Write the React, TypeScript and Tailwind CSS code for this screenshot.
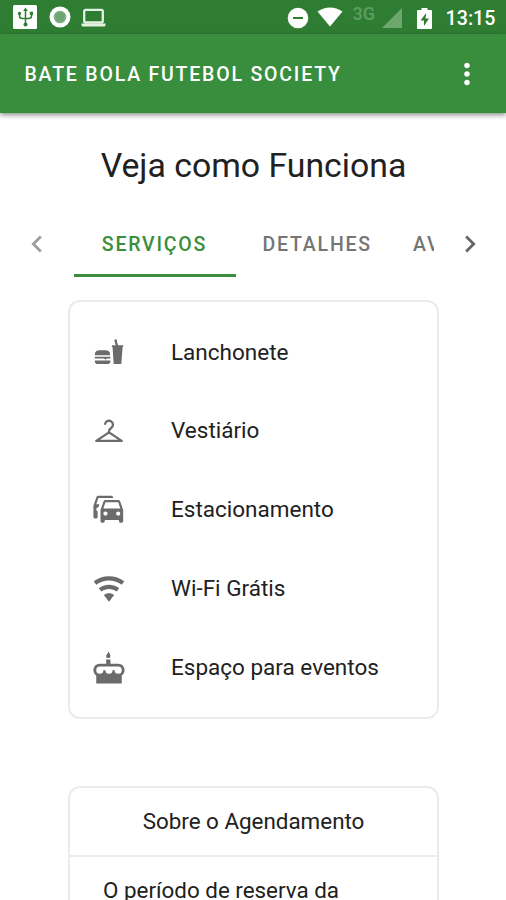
import type { ReactNode } from 'react';
import { clsx } from 'clsx';
import { MdChevronLeft, MdChevronRight, MdMoreVert } from 'react-icons/md';

interface Service {
  label: string;
  icon: ReactNode;
}

function PathIcon({ d }: { d: string }) {
  return (
    <svg viewBox="0 0 24 24" fill="currentColor" className="size-[34px]">
      <path d={d} />
    </svg>
  );
}

function FoodIcon() {
  return (
    <svg viewBox="0 0 24 24" fill="currentColor" className="size-[34px]">
      <path d="M2 14.3v-.6c0-1.900 1.400-2.900 3.300-2.900h4.200c1.900 0 3.300 1 3.300 2.900v.6zM2 15.400h11v1.100h-2.300l-1.200.8-1.200-.8H2zM2 18h11v.5c0 1.300-.9 2-2 2H4c-1.100 0-2-.7-2-2z" />
      <path d="M14 7.200h2.700l-1-3.700 1.500-.6 1.200 4.300H22v1.300h-.4l-.9 12h-5.400l-.8-12H14z" />
    </svg>
  );
}

function HangerIcon() {
  return (
    <svg viewBox="0 0 24 24" fill="none" stroke="currentColor" strokeWidth="1.6" strokeLinejoin="round" className="size-[34px]">
      <path d="M9.200 7.600a2.800 2.800 0 1 1 4.300 2.300c-1 .7-1.500 1.100-1.500 2.300v.8M12 13 3 19h18z" />
    </svg>
  );
}

const WIFI =
  'M12,21L15.6,16.2C14.6,15.45 13.35,15 12,15C10.65,15 9.4,15.45 8.4,16.2L12,21M12,3C7.95,3 4.21,4.34 1.2,6.6L3,9C5.5,7.12 8.62,6 12,6C15.38,6 18.5,7.12 21,9L22.8,6.6C19.79,4.34 16.05,3 12,3M12,9C9.3,9 6.81,9.89 4.8,11.4L6.6,13.8C8.1,12.67 9.97,12 12,12C14.03,12 15.9,12.67 17.4,13.8L19.2,11.4C17.19,9.89 14.7,9 12,9Z';
const CARS =
  'M8,11L9.5,6.5H18.5L20,11M18.5,16A1.5,1.5 0 0,1 17,14.5A1.5,1.5 0 0,1 18.5,13A1.5,1.5 0 0,1 20,14.5A1.5,1.5 0 0,1 18.5,16M9.5,16A1.5,1.5 0 0,1 8,14.5A1.5,1.5 0 0,1 9.5,13A1.5,1.5 0 0,1 11,14.5A1.5,1.5 0 0,1 9.5,16M19.92,6C19.71,5.4 19.14,5 18.5,5H9.5C8.86,5 8.29,5.4 8.08,6L6,12V20A1,1 0 0,0 7,21H8A1,1 0 0,0 9,20V19H19V20A1,1 0 0,0 20,21H21A1,1 0 0,0 22,20V12L19.92,6M14.92,3C14.71,2.4 14.14,2 13.5,2H4.5C3.86,2 3.29,2.4 3.08,3L1,9V17A1,1 0 0,0 2,18H3A1,1 0 0,0 4,17V12.91C3.22,12.63 2.82,11.77 3.1,11C3.32,10.4 3.87,10 4.5,10H4.57L5.27,8H3L4.5,3.5H15.09L14.92,3Z';
const CAKE =
  'M11.5,0.5C12,0.75 13,2.4 13,3.5C13,4.6 12.33,5 11.5,5C10.67,5 10,4.85 10,3.75C10,2.65 11,2 11.5,0.5M18.5,9C21,9 23,11 23,13.5C23,15.06 22.21,16.43 21,17.24V23H12L3,23V17.24C1.79,16.43 1,15.06 1,13.5C1,11 3,9 5.5,9H10V6H13V9H18.5M12,16A2.5,2.5 0 0,0 14.5,13.5H16A2.5,2.5 0 0,0 18.5,16A2.5,2.5 0 0,0 21,13.5A2.5,2.5 0 0,0 18.5,11H5.5A2.5,2.5 0 0,0 3,13.5A2.5,2.5 0 0,0 5.5,16A2.5,2.5 0 0,0 8,13.5H9.5A2.5,2.5 0 0,0 12,16Z';

const SERVICES: Service[] = [
  { label: 'Lanchonete', icon: <FoodIcon /> },
  { label: 'Vestiário', icon: <HangerIcon /> },
  { label: 'Estacionamento', icon: <PathIcon d={CARS} /> },
  { label: 'Wi-Fi Grátis', icon: <PathIcon d={WIFI} /> },
  { label: 'Espaço para eventos', icon: <PathIcon d={CAKE} /> },
];

function StatusBar() {
  return (
    <div className="flex h-[34px] shrink-0 items-center bg-[#2e7d32] pl-[13px] pr-[10.5px] text-white">
      {/* Notifications */}
      <svg viewBox="0 0 24 24" className="size-6">
        <rect width="24" height="24" rx="1.500" fill="#fff" />
        <g fill="none" stroke="#2e7d32" strokeWidth="1.500">
          <path d="M12.500 4v16M6.500 8.500v2.500q0 2.500 3 2.500h6q3 0 3-2.500V8" />
        </g>
        <path d="m12.500 2.500 2.300 3.500h-4.600zM16.800 6.800H20V10h-3.200z" fill="#2e7d32" />
        <circle cx="6.500" cy="8.500" r="1.700" fill="#2e7d32" />
        <circle cx="12.500" cy="19.500" r="2" fill="#2e7d32" />
      </svg>
      <svg viewBox="0 0 22 22" className="ml-[11.500px] size-[22px]">
        <circle cx="11" cy="11" r="10.500" fill="#fff" />
        <circle cx="11" cy="11" r="6.300" fill="#80b183" />
        <circle cx="11" cy="11" r="4.800" fill="#6fa573" />
      </svg>
      <svg viewBox="0 0 25 20" className="ml-[10.5px] h-5 w-[25px] translate-y-px">
        <rect x="3.200" y="1.800" width="18.600" height="12.700" rx="1.500" fill="none" stroke="#e3f2e2" strokeWidth="2.300" />
        <path d="M0.500 15.500h24v1.500q0 1.500-1.500 1.500H2q-1.500 0-1.500-1.500z" fill="#e3f2e2" />
      </svg>

      {/* System icons */}
      <svg viewBox="0 0 22 22" className="ml-auto size-[22px] translate-y-px">
        <circle cx="11" cy="11" r="10.300" fill="#fff" />
        <path d="M6 10h10v2H6z" fill="#2e7d32" />
      </svg>
      <svg viewBox="0 0 26 20" className="ml-[8px] h-5 w-[26px]">
        <path d="M.5 4.500Q13-3.500 25.500 4.500L13 19.500z" fill="#fff" />
      </svg>
      <span className="ml-[10px] h-[27px] text-[18px] font-medium leading-[20px] text-[#5f9e62]">3G</span>
      <svg viewBox="0 0 20 20" className="ml-[7px] h-5 w-5 translate-y-px">
        <path d="M20 0v20H0z" fill="#6da770" />
      </svg>
      <svg viewBox="0 0 15 21" className="ml-[15px] h-[21px] w-[15px] translate-y-px">
        <path d="M4.500 0h6v2H14q1 0 1 1v17q0 1-1 1H1q-1 0-1-1V3q0-1 1-1h3.500z" fill="#fff" />
        <path d="M9 5 3.500 12.500H7V18l5-7.500H8.500z" fill="#2e7d32" />
      </svg>
      <span className="ml-[13.500px] pt-[3px] text-[19.700px] font-medium leading-none">13:15</span>
    </div>
  );
}

function Tab({ label, active }: { label: string; active?: boolean }) {
  return (
    <div
      className={clsx(
        'flex h-[67px] shrink-0 items-center border-b-[3px] pt-[5px] text-[19.5px] font-medium tracking-[1.8px]',
        active ? 'w-[162px] justify-center border-[#388e3c] text-[#388e3c]' : 'border-transparent pl-[27px] pr-[14px] text-[#757575]',
      )}
    >
      {label}
    </div>
  );
}

export default function App() {
  return (
    <div className="flex h-[900px] w-[506px] flex-col overflow-hidden bg-white font-[Roboto,sans-serif] text-[#212121]">
      <StatusBar />

      <header className="z-10 flex h-[79px] shrink-0 items-center justify-between bg-[#388e3c] pl-[24.5px] pr-[22px] text-white shadow-[0_2px_5px_rgba(0,0,0,0.45)]">
        <h1 className="pt-[2px] text-[19.5px] font-medium tracking-[1.8px]">BATE BOLA FUTEBOL SOCIETY</h1>
        <MdMoreVert className="size-[34px]" />
      </header>

      <h2 className="mt-[32px] h-[40px] shrink-0 pl-px text-center text-[33.8px] leading-[41px]">Veja como Funciona</h2>

      {/* Tabs */}
      <nav className="mt-[25px] flex h-[68px] shrink-0 items-start">
        <div className="flex h-[68px] w-[73.5px] shrink-0 items-center justify-center text-[#9e9e9e]">
          <MdChevronLeft className="size-[34px]" />
        </div>
        <div className="flex w-[360.5px] overflow-hidden">
          <Tab label="SERVIÇOS" active />
          <Tab label="DETALHES" />
          <Tab label="AVALIAÇÕES" />
        </div>
        <div className="flex h-[68px] flex-1 items-center justify-center text-[#666]">
          <MdChevronRight className="size-[34px]" />
        </div>
      </nav>

      {/* Services */}
      <ul className="ml-[68px] mr-[67px] mt-[22px] h-[419px] shrink-0 rounded-xl border-2 border-[#ebebeb] py-[11px]">
        {SERVICES.map((s) => (
          <li key={s.label} className="flex h-[78.8px] items-center pl-[22px] text-[22.5px]">
            <span className="mr-[45px] text-[#6b6b6b]">{s.icon}</span>
            {s.label}
          </li>
        ))}
      </ul>

      {/* Booking info */}
      <section className="ml-[68px] mr-[67px] mt-[67px] h-[200px] shrink-0 rounded-t-xl border-2 border-[#ebebeb] text-[22.4px]">
        <h3 className="flex h-[69px] items-center justify-center border-b-2 border-[#ebebeb]">Sobre o Agendamento</h3>
        <p className="px-[33px] pt-[16px] leading-[34px]">O período de reserva da</p>
      </section>
    </div>
  );
}
